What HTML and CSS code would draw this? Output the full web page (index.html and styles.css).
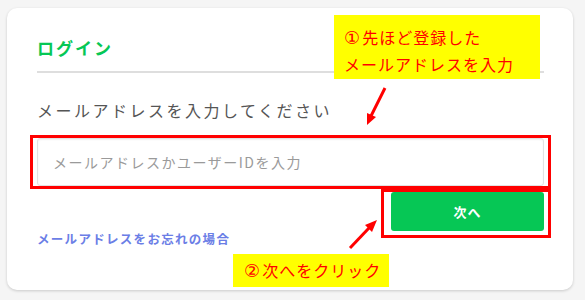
FILE: index.html
```html
<!DOCTYPE html>
<html lang="ja">
<head>
<meta charset="utf-8">
<link rel="stylesheet" href="styles.css">
</head>
<body>
<div class="page">
  <div class="card">
    <h1 class="title">ログイン</h1>
    <p class="label">メールアドレスを入力してください</p>
    <div class="input">メールアドレスかユーザーIDを入力</div>
    <div class="footer">
      <a class="forgot">メールアドレスをお忘れの場合</a>
      <button class="next">次へ</button>
    </div>
  </div>

  <div class="mark mark-input"></div>
  <div class="mark mark-button"></div>
  <div class="note note-1"><span class="num">①</span>先ほど登録した<br>メールアドレスを入力</div>
  <div class="note note-2"><span class="num">②</span>次へをクリック</div>
  <svg class="arrows" width="585" height="300" viewBox="0 0 585 300">
    <line x1="385" y1="88" x2="371" y2="116" stroke="#ff0000" stroke-width="3"/>
    <polygon points="367,125 376,117 367,113" fill="#ff0000"/>
    <line x1="350" y1="248" x2="369" y2="228" stroke="#ff0000" stroke-width="3"/>
    <polygon points="377,220 372,232 365,225" fill="#ff0000"/>
  </svg>
</div>
</body>
</html>
```
FILE: styles.css
```css
html, body {
  margin: 0;
  padding: 0;
}
body {
  background: #f5f5f5;
  font-family: "Noto Sans CJK JP", "Noto Sans", sans-serif;
  width: 585px;
  height: 300px;
  overflow: hidden;
}
.page {
  position: relative;
  width: 585px;
  height: 300px;
  padding: 8px 0 0 7px;
  box-sizing: border-box;
}
.card {
  width: 566px;
  height: 282px;
  background: #fff;
  border-radius: 10px;
  box-shadow: 0 1px 3px rgba(0, 0, 0, 0.18);
  box-sizing: border-box;
  padding: 28px 29px 0 30px;
  display: flex;
  flex-direction: column;
}
.title {
  margin: 0;
  font-size: 17px;
  line-height: 24px;
  font-weight: 700;
  color: #06c755;
  letter-spacing: 2px;
  padding-bottom: 11px;
  border-bottom: 2px solid #dedede;
}
.label {
  margin: 25px 0 0;
  font-size: 16px;
  line-height: 24px;
  color: #555;
  letter-spacing: 2.5px;
}
.input {
  margin-top: 16px;
  height: 48px;
  box-sizing: border-box;
  border: 1px solid #e2e2e2;
  border-radius: 3px;
  box-shadow: inset 0 1px 2px rgba(0, 0, 0, 0.06);
  padding-left: 15px;
  display: flex;
  align-items: center;
  font-size: 14px;
  color: #9a9a9a;
  letter-spacing: 1.5px;
}
.footer {
  display: flex;
  justify-content: space-between;
  align-items: flex-start;
  margin-top: 6px;
}
.forgot {
  margin-top: 38px;
  font-size: 12.5px;
  line-height: 18px;
  font-weight: 700;
  color: #6b7ee6;
  letter-spacing: 1.3px;
}
.next {
  width: 153px;
  height: 39px;
  border: none;
  border-radius: 3px;
  background: #06c755;
  color: #fff;
  font-family: inherit;
  font-size: 13px;
  font-weight: 700;
  letter-spacing: 1px;
  padding: 0;
}
.mark {
  position: absolute;
  border: 3px solid #ff0000;
  box-sizing: border-box;
}
.mark-input {
  left: 30px;
  top: 135px;
  width: 521px;
  height: 54px;
}
.mark-button {
  left: 381px;
  top: 189px;
  width: 170px;
  height: 49px;
}
.note {
  position: absolute;
  background: #ffff00;
  color: #ff0000;
  font-size: 16px;
  letter-spacing: 1px;
  box-sizing: border-box;
}
.num {
  font-family: "DejaVu Sans", sans-serif;
  font-size: 18px;
  margin-right: 1px;
}
.note-1 {
  left: 334px;
  top: 15px;
  width: 206px;
  height: 64px;
  padding: 9px 0 0 10px;
  line-height: 27px;
}
.note-2 {
  left: 233px;
  top: 254px;
  width: 156px;
  height: 33px;
  padding: 4px 0 0 11px;
  line-height: 25px;
}
.arrows {
  position: absolute;
  left: 0;
  top: 0;
}
```
